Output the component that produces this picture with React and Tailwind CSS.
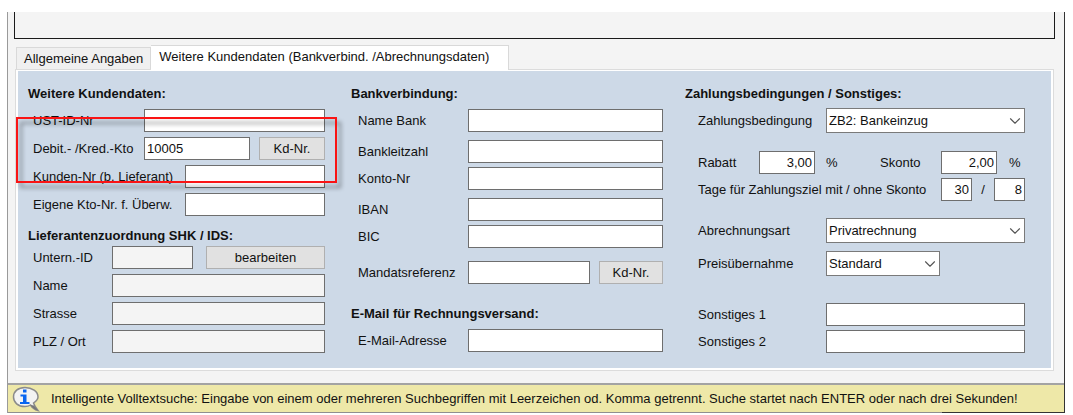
import React from "react";
import { ChevronDown } from "lucide-react";
import clsx from "clsx";

const paymentTerms = ["ZB2: Bankeinzug"];
const billingTypes = ["Privatrechnung"];
const priceModes = ["Standard"];

const Heading = ({ children, className }) => (
  <h2 className={clsx("h-4 font-bold whitespace-nowrap", className)}>{children}</h2>
);

const Row = ({ children, className = "h-[23px]" }) => (
  <div className={clsx("flex items-center", className)}>{children}</div>
);

const Label = ({ id, children, className }) => (
  <label htmlFor={id} className={clsx("shrink-0 whitespace-nowrap", className)}>{children}</label>
);

const TextBox = ({ id, className = "flex-1", bg = "bg-white", ...props }) => (
  <input
    id={id}
    type="text"
    className={clsx("h-[23px] min-w-0 border border-[#6e6e6e] px-[2px] outline-none", bg, className)}
    {...props}
  />
);

const Button = ({ children, className }) => (
  <button type="button" className={clsx("h-[23px] shrink-0 border border-[#b0b0b0] bg-[#e1e1e1] text-center", className)}>
    {children}
  </button>
);

const SelectBox = ({ id, options, className }) => (
  <div className={clsx("relative", className)}>
    <select id={id} className="block h-[25px] w-full appearance-none border border-[#7a7a7a] bg-white px-[2px] outline-none">
      {options.map((o) => <option key={o}>{o}</option>)}
    </select>
    <ChevronDown size={18} strokeWidth={1.5} className="absolute right-px top-1 text-[#555555] pointer-events-none" />
  </div>
);

const InfoIcon = () => (
  <svg width="28" height="26" viewBox="0 0 28 26" className="shrink-0">
    <path
      d="M13 1.500C6 1.500 1.500 5.500 1.500 11C1.500 16.500 6 20.500 13 20.500C15 20.500 17 20 18.500 19C20 21.500 22.500 23.500 26 24.500C24.500 22.500 22.500 20 21.500 17C24.500 15 26 13.500 26 11C26 5.500 20 1.500 13 1.500Z"
      fill="#f3f3f3"
      stroke="#8b8b8b"
      strokeWidth="1.500"
    />
    <path d="M18.500 19C20 21.500 23 24 26 24.500L22 19.500Z" fill="#777777" />
    <path d="M11 3.500h3.500v3H11zM8.500 8.500h6v7.500h3v2H8v-2h3v-5.500H8.500z" fill="#0a66f0" />
  </svg>
);

const CustomerData = () => (
  <section className="relative pr-[26px]">
    <Heading>Weitere Kundendaten:</Heading>
    <div className="mt-[7px] flex flex-col gap-[5px] pl-[5px]">
      <Row>
        <Label id="ust" className="w-[111px]">UST-ID-Nr</Label>
        <TextBox id="ust" />
      </Row>
      <Row>
        <Label id="debit" className="w-[111px]">Debit.- /Kred.-Kto</Label>
        <TextBox id="debit" defaultValue="10005" />
        <Button className="ml-[9px] w-[66px]">Kd-Nr.</Button>
      </Row>
      <Row>
        <Label id="kdnr" className="w-[152px]">Kunden-Nr (b. Lieferant)</Label>
        <TextBox id="kdnr" />
      </Row>
      <Row>
        <Label id="eigene" className="w-[152px]">Eigene Kto-Nr. f. Überw.</Label>
        <TextBox id="eigene" />
      </Row>
    </div>

    <Heading className="mt-3">Lieferantenzuordnung SHK / IDS:</Heading>
    <div className="mt-[2px] flex flex-col gap-[5px] pl-[5px]">
      <Row>
        <Label id="untern" className="w-[79px]">Untern.-ID</Label>
        <TextBox id="untern" bg="bg-[#f4f4f4]" />
        <Button className="ml-[13px] w-[119px]">bearbeiten</Button>
      </Row>
      <Row>
        <Label id="name" className="w-[79px]">Name</Label>
        <TextBox id="name" bg="bg-[#f4f4f4]" />
      </Row>
      <Row>
        <Label id="strasse" className="w-[79px]">Strasse</Label>
        <TextBox id="strasse" bg="bg-[#f4f4f4]" />
      </Row>
      <Row>
        <Label id="ort" className="w-[79px]">PLZ / Ort</Label>
        <TextBox id="ort" bg="bg-[#f4f4f4]" />
      </Row>
    </div>

    {/* Rote Markierung um das Debitorenkonto */}
    <div className="absolute -left-3 right-[14px] top-[31px] h-[66px] border-2 border-[#fa1414] pointer-events-none drop-shadow-[4px_5px_2px_rgba(0,0,0,0.4)]" />
  </section>
);

const BankData = () => (
  <section className="pr-[22px]">
    <Heading>Bankverbindung:</Heading>
    <div className="pl-[7px]">
      <Row className="mt-[7px] h-[23px]">
        <Label id="bank" className="w-[110px]">Name Bank</Label>
        <TextBox id="bank" />
      </Row>
      <Row className="mt-2 h-[23px]">
        <Label id="blz" className="w-[110px]">Bankleitzahl</Label>
        <TextBox id="blz" />
      </Row>
      <Row className="mt-1 h-[23px]">
        <Label id="konto" className="w-[110px]">Konto-Nr</Label>
        <TextBox id="konto" />
      </Row>
      <Row className="mt-2 h-[23px]">
        <Label id="iban" className="w-[110px]">IBAN</Label>
        <TextBox id="iban" />
      </Row>
      <Row className="mt-1 h-[23px]">
        <Label id="bic" className="w-[110px]">BIC</Label>
        <TextBox id="bic" />
      </Row>
      <Row className="mt-[13px] h-[23px]">
        <Label id="mandat" className="w-[110px]">Mandatsreferenz</Label>
        <TextBox id="mandat" />
        <Button className="ml-[9px] w-16">Kd-Nr.</Button>
      </Row>
    </div>
    <Heading className="mt-[22px]">E-Mail für Rechnungsversand:</Heading>
    <Row className="mt-[7px] h-[23px] pl-[7px]">
      <Label id="mail" className="w-[110px]">E-Mail-Adresse</Label>
      <TextBox id="mail" />
    </Row>
  </section>
);

const PaymentData = () => (
  <section className="pr-[26px]">
    <Heading>Zahlungsbedingungen / Sonstiges:</Heading>
    <div className="mt-[6px] pl-[13px]">
      <Row className="h-[25px]">
        <Label id="zb" className="w-[128px]">Zahlungsbedingung</Label>
        <SelectBox id="zb" options={paymentTerms} className="flex-1" />
      </Row>
      <Row className="mt-[18px] h-[23px]">
        <Label id="rabatt" className="w-[61px]">Rabatt</Label>
        <TextBox id="rabatt" className="w-14 text-right" defaultValue="3,00" />
        <span className="ml-[11px]">%</span>
        <Label id="skonto" className="ml-auto w-[61px]">Skonto</Label>
        <TextBox id="skonto" className="w-14 text-right" defaultValue="2,00" />
        <span className="w-7 pl-3">%</span>
      </Row>
      <Row className="mt-1 h-[23px]">
        <Label id="tage">Tage für Zahlungsziel mit / ohne Skonto</Label>
        <TextBox id="tage" className="ml-auto w-[31px] text-right" defaultValue="30" />
        <span className="w-[22px] text-center">/</span>
        <TextBox id="tage-ohne" aria-label="Tage ohne Skonto" className="w-[31px] text-right" defaultValue="8" />
      </Row>
      <Row className="mt-[17px] h-[25px]">
        <Label id="art" className="w-[128px]">Abrechnungsart</Label>
        <SelectBox id="art" options={billingTypes} className="flex-1" />
      </Row>
      <Row className="mt-2 h-[25px]">
        <Label id="preis" className="w-[128px]">Preisübernahme</Label>
        <SelectBox id="preis" options={priceModes} className="w-[114px]" />
      </Row>
      <Row className="mt-[27px] h-[23px]">
        <Label id="s1" className="w-[128px]">Sonstiges 1</Label>
        <TextBox id="s1" />
      </Row>
      <Row className="mt-1 h-[23px]">
        <Label id="s2" className="w-[128px]">Sonstiges 2</Label>
        <TextBox id="s2" />
      </Row>
    </div>
  </section>
);

export default function App() {
  return (
    <div className="min-h-screen bg-white pl-[7px] pr-2 pt-3 font-['Liberation_Sans',Arial,sans-serif] text-[13px] leading-4 text-[#111111]">
      <div className="border-l border-r border-l-[#9a9a9a] border-r-[#333333] bg-[#f4f4f4]">
        <div className="ml-[6px] mr-[9px] h-[27px] border border-t-0 border-[#1a1a1a]" />

        <div className="ml-[7px] mr-[10px] mt-[6px]">
          <div role="tablist" className="flex items-end pl-px">
            <button role="tab" aria-selected="false" className="h-[22px] border border-b-0 border-[#d9d9d9] bg-[#f0f0f0] px-[7px]">
              Allgemeine Angaben
            </button>
            <button role="tab" aria-selected="true" className="relative -mb-px h-[25px] border border-b-0 border-l-0 border-[#d9d9d9] bg-white pl-2 pr-[19px] pb-[3px]">
              Weitere Kundendaten (Bankverbind. /Abrechnungsdaten)
            </button>
          </div>
          <div className="border border-[#dcdcdc] bg-white px-[2px] pb-[2px] pt-px">
            <div className="grid grid-cols-[minmax(0,323fr)_minmax(0,334fr)_minmax(0,366fr)] bg-[#cdd9e7] pb-[15px] pl-[10px] pt-[15px]">
              <CustomerData />
              <BankData />
              <PaymentData />
            </div>
          </div>
        </div>

        <footer className="mt-3 border-t-2 border-[#a3a3a3] bg-[#eee8a8]">
          <div className="flex h-[27px] items-center pl-1">
            <InfoIcon />
            <span className="ml-[11px] whitespace-nowrap">
              Intelligente Volltextsuche: Eingabe von einem oder mehreren Suchbegriffen mit Leerzeichen od. Komma getrennt. Suche startet nach ENTER oder nach drei Sekunden!
            </span>
          </div>
          <div className="flex h-px bg-[#8f8f8f]">
            <div className="ml-auto w-[122px] bg-[#333333]" />
          </div>
        </footer>
      </div>
    </div>
  );
}
